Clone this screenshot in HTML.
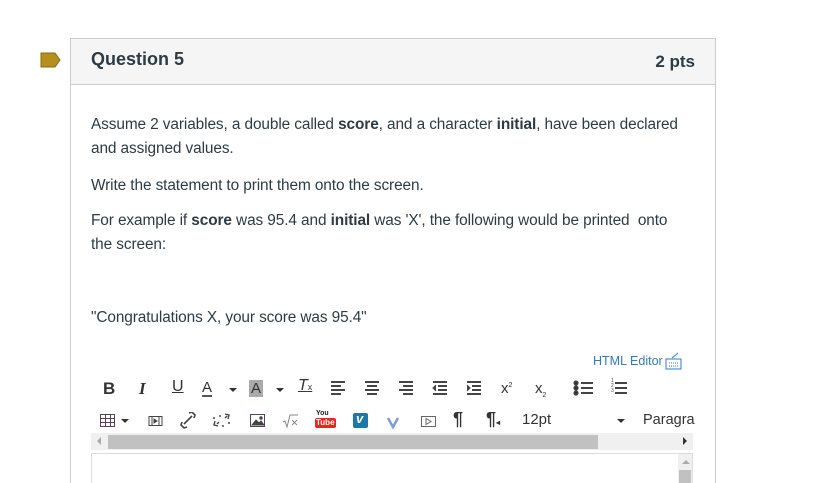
<!DOCTYPE html>
<html style="overflow:hidden;height:483px"><head><meta charset="utf-8"><style>
html,body{overflow:hidden}
body{margin:0;width:813px;height:483px;background:#fff;position:relative;font-family:"Liberation Sans",sans-serif;color:#2d3b45}
.a{position:absolute;white-space:nowrap}
.panel{position:absolute;left:70px;top:38px;width:646px;height:450px;border:1px solid #c7cdd1;box-sizing:border-box}
.hdr{position:absolute;left:0;top:0;right:0;height:45px;background:#f5f5f5;border-bottom:1px solid #c7cdd1}
.t{font-size:15.4px;letter-spacing:-0.1px}
.ic{position:absolute;font-size:15px;color:#333;font-weight:bold}
.c{position:absolute;width:0;height:0;border-left:4px solid transparent;border-right:4px solid transparent;border-top:4px solid #333}
</style></head><body>
<svg class="a" style="left:40px;top:52px" width="22" height="16"><path d="M1 1H15L20 8L15 15H1Z" fill="#b5901d" stroke="#8a6d10"/></svg>
<div class="panel">
 <div class="hdr"></div>
 <div class="a" style="left:20px;top:10px;font-size:18px;font-weight:bold;color:#2d3b45">Question 5</div>
 <div class="a" style="right:20px;top:13px;font-size:17px;font-weight:bold;color:#2d3b45">2 pts</div>
</div>
<div class="a t" style="left:91px;top:116px">Assume 2 variables, a double called <b>score</b>, and a character <b>initial</b>, have been declared</div>
<div class="a t" style="left:91px;top:140px">and assigned values.</div>
<div class="a t" style="left:91px;top:177px">Write the statement to print them onto the screen.</div>
<div class="a t" style="left:91px;top:212px">For example if <b>score</b> was 95.4 and <b>initial</b> was 'X', the following would be printed&nbsp; onto</div>
<div class="a t" style="left:91px;top:236px">the screen:</div>
<div class="a t" style="left:91px;top:309px">"Congratulations X, your score was 95.4"</div>
<div class="a" style="left:593px;top:354px;font-size:12.5px;color:#2d7bd0">HTML Editor</div>
<svg class="a" style="left:664px;top:352px" width="20" height="18"><path d="M8 6L14 1" stroke="#2d7bd0" fill="none"/><rect x="2" y="7" width="15" height="10" fill="none" stroke="#2d7bd0"/><path d="M5 11h10M5 14h10" stroke="#2d7bd0" stroke-dasharray="1 1"/></svg>
<div class="ic" style="left:103px;top:379px;font-size:17px">B</div>
<div class="ic" style="left:139px;top:379px;font-size:17px;font-style:italic;font-family:'Liberation Serif',serif">I</div>
<div class="ic" style="left:172px;top:378px;font-size:16px;text-decoration:underline;font-weight:normal">U</div>
<div class="ic" style="left:202px;top:380px;font-size:15px;font-weight:normal;border-bottom:2px solid #555;line-height:15px">A</div>
<div class="c" style="left:229px;top:388px"></div>
<div class="ic" style="left:249px;top:380px;font-size:15px;font-weight:normal;background:#aaa;padding:0 2px;line-height:17px">A</div>
<div class="c" style="left:276px;top:388px"></div>
<div class="ic" style="left:298px;top:377px;font-size:16px;font-style:italic;font-weight:normal;text-decoration:underline">T<span style="font-size:9px;font-style:normal">x</span></div>
<svg class="a" style="left:330px;top:380px" width="300" height="16" stroke="#444" stroke-width="2">
<path d="M1 2h14M1 6h10M1 10h14M1 14h10"/>
<path d="M35 2h14M37 6h10M35 10h14M37 14h10"/>
<path d="M69 2h14M73 6h10M69 10h14M73 14h10"/>
<path d="M103 2h14M108 6h9M108 10h9M103 14h14"/><path d="M106 5l-3 3 3 3" fill="#444" stroke-width="1"/>
<path d="M137 2h14M142 6h9M142 10h9M137 14h14"/><path d="M137 5l3 3-3 3" fill="#444" stroke-width="1"/>
<path d="M251 3h12M251 8h12M251 13h12"/><circle cx="246" cy="3" r="1.6"/><circle cx="246" cy="8" r="1.6"/><circle cx="246" cy="13" r="1.6"/>
<path d="M285 3h12M285 8h12M285 13h12"/>
</svg>
<div class="ic" style="left:501px;top:380px;font-weight:normal;font-size:15px">x<sup style="font-size:7px">2</sup></div>
<div class="ic" style="left:535px;top:380px;font-weight:normal;font-size:15px">x<sub style="font-size:7px">2</sub></div>
<div class="a" style="left:611px;top:379px;font-size:5px;line-height:5px;color:#444">1<br>2<br>3</div>
<svg class="a" style="left:100px;top:412px" width="530" height="18" fill="none" stroke="#444">
<rect x="0.5" y="2.5" width="14" height="12" stroke="#5b3e5e"/><path d="M0 6.5h15M0 10.5h15M5.5 2v13M10.5 2v13" stroke="#5b3e5e"/>
<path d="M49 4.5h13v9H49z M52 4v10M59 4v10"/><path d="M54 7l3 2-3 2z" fill="#444"/>
<path d="M84 12l8-8M82 10l-1 3 3 3 3-1M94 6l1-3-3-3-3 1" stroke-width="1.6"/>
<path d="M117 12l2-2M125 6l2-2M115 9l-1 4 4 1M128 7l1-4-4-1M120 3v2M123 13v2M113 6h2M128 11h2" stroke-width="1.4"/>
<rect x="150.5" y="2.5" width="14" height="12" stroke="#5b3e5e"/><path d="M152 13l4-5 3 3 2-2 3 4z" fill="#444"/><circle cx="161" cy="6" r="1.2" fill="#444"/>
<path d="M183 10l2-1 2 6 3-12h8" stroke="#888"/><path d="M192 8l5 5M197 8l-5 5" stroke="#888"/>
<rect x="253" y="1" width="15" height="15" rx="2" fill="#1b78a8" stroke="none"/>
<path d="M288 6l5 9 5-9" stroke="#7a9ed8" stroke-width="2.5"/>
<rect x="321.5" y="4.5" width="14" height="10" stroke="#666"/><path d="M326 6.5v6l5-3z" stroke="#666"/>
</svg>
<div class="c" style="left:121px;top:419px"></div>
<div class="a" style="left:316px;top:410px;font-size:7px;font-weight:bold;line-height:7px;color:#222">You</div>
<div class="a" style="left:315px;top:418px;font-size:8px;font-weight:bold;background:#e8261c;color:#fff;padding:0 1px;line-height:10px;border-radius:2px">Tube</div>
<div class="a" style="left:356px;top:411px;font-size:13px;font-weight:bold;font-style:italic;color:#fff">v</div>
<div class="ic" style="left:453px;top:409px;font-size:18px">¶</div>
<div class="ic" style="left:486px;top:409px;font-size:18px">¶<span style="font-size:8px">◂</span></div>
<div class="a" style="left:522px;top:411px;font-size:15px;color:#333">12pt</div>
<div class="c" style="left:617px;top:419px"></div>
<div class="a" style="left:643px;top:412px;font-size:14.5px;color:#333">Paragra</div>
<div class="a" style="left:91px;top:433px;width:602px;height:17px;background:#f0f0f0"></div>
<div class="a" style="left:108px;top:435px;width:490px;height:14px;background:#c1c1c1"></div>
<div class="a" style="left:97px;top:437px;width:0;height:0;border-top:4px solid transparent;border-bottom:4px solid transparent;border-right:4px solid #aaa"></div>
<div class="a" style="left:683px;top:437px;width:0;height:0;border-top:4px solid transparent;border-bottom:4px solid transparent;border-left:4px solid #333"></div>
<div class="a" style="left:91px;top:453px;width:602px;height:40px;border:1px solid #ddd;box-sizing:border-box"></div>
<div class="a" style="left:678px;top:454px;width:14px;height:30px;background:#f0f0f0"></div>
<div class="a" style="left:682px;top:460px;width:0;height:0;border-left:4px solid transparent;border-right:4px solid transparent;border-bottom:4px solid #aaa"></div>
<div class="a" style="left:679px;top:470px;width:12px;height:14px;background:#c1c1c1"></div>
</body></html>
